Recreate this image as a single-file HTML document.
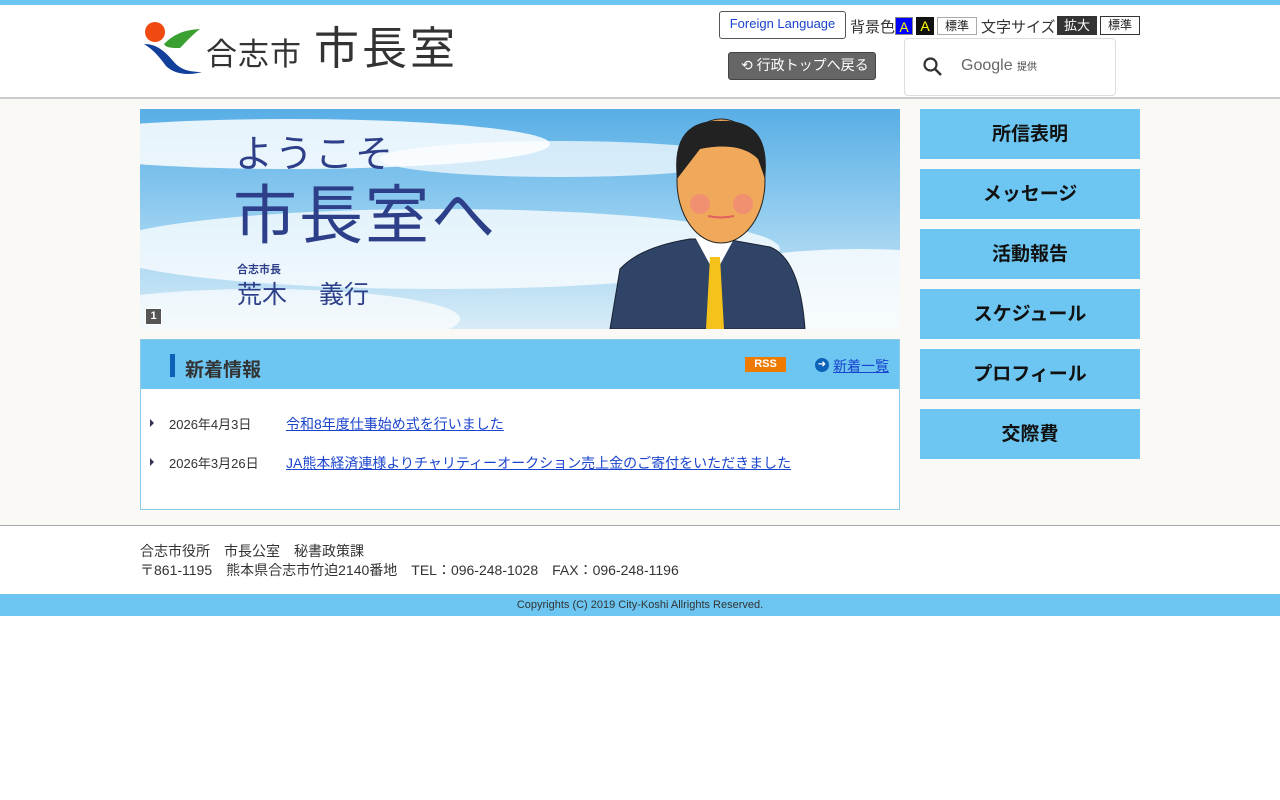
<!DOCTYPE html>
<html><head><meta charset="utf-8"><style>
*{margin:0;padding:0;box-sizing:border-box}
body{width:1280px;height:800px;background:#fff;font-family:"Liberation Sans","Noto Sans CJK JP",sans-serif;color:#333;position:relative;overflow:hidden}
.top{height:5px;background:#6cc6f1}
header{height:94px;border-bottom:2px solid #ccc;position:relative}
.abs{position:absolute}
main{background:#faf9f6;height:426px;position:relative}
.nav div{position:absolute;left:920px;width:220px;height:50px;background:#6cc6f1;font-weight:bold;font-size:19px;color:#111;text-align:center;line-height:52px}
a{color:#1a44cc;text-decoration:underline}
</style></head><body>
<div class="top"></div>
<header>
<svg class="abs" style="left:144px;top:17px" width="58" height="54" viewBox="0 0 58 54">
<circle cx="11" cy="10" r="10" fill="#f04a10"/>
<path d="M20 22 C30 12 40 8 56 7 C48 13 42 20 36 26 C28 26 22 26 20 22Z" fill="#3aa032"/>
<path d="M0 22 C12 22 20 28 30 40 C36 47 44 50 58 50 C44 54 30 52 22 44 C16 36 10 28 0 22Z" fill="#123f9a"/>
</svg>
<div class="abs" style="left:206px;top:24px;font-size:31px;color:#333;letter-spacing:1px">合志市</div>
<div class="abs" style="left:314px;top:16px;font-size:45px;color:#333;letter-spacing:3px;line-height:56px">市長室</div>
<div class="abs" style="left:719px;top:6px;width:127px;height:28px;border:1px solid #555;border-radius:3px;font-size:13px;color:#1a44cc;text-align:center;line-height:24px">Foreign Language</div>
<div class="abs" style="left:850px;top:11px;font-size:15px;color:#333">背景色</div>
<div class="abs" style="left:895px;top:12px;width:18px;height:18px;background:#0000ff;color:#ff0;font-size:14px;text-align:center;line-height:18px;border:1px solid #888">A</div>
<div class="abs" style="left:916px;top:12px;width:18px;height:18px;background:#111;color:#ff0;font-size:14px;text-align:center;line-height:18px">A</div>
<div class="abs" style="left:937px;top:12px;width:40px;height:18px;border:1px solid #aaa;font-size:12px;text-align:center;line-height:16px;color:#222">標準</div>
<div class="abs" style="left:981px;top:11px;font-size:15px;color:#333">文字サイズ</div>
<div class="abs" style="left:1057px;top:11px;width:40px;height:19px;background:#333;color:#fff;font-size:13px;text-align:center;line-height:19px">拡大</div>
<div class="abs" style="left:1100px;top:11px;width:40px;height:19px;border:1px solid #333;font-size:12px;text-align:center;line-height:17px;color:#222">標準</div>
<div class="abs" style="left:728px;top:47px;width:148px;height:28px;background:#666;border:1px solid #444;border-radius:3px;color:#fff;font-size:14px;line-height:24px;padding-left:12px">⟲ 行政トップへ戻る</div>
<div class="abs" style="left:904px;top:33px;width:212px;height:58px;border:1px solid #ddd;border-radius:4px;background:#fff">
<svg class="abs" style="left:17px;top:17px" width="22" height="22" viewBox="0 0 22 22"><circle cx="8.5" cy="8.5" r="6" fill="none" stroke="#333" stroke-width="2.2"/><path d="M13 13L19 19" stroke="#333" stroke-width="2.5"/></svg>
<div class="abs" style="left:56px;top:18px;font-size:16px;color:#666">Google <span style="font-size:10px;color:#444">提供</span></div>
</div>
</header>
<main>
<div class="abs" style="left:140px;top:10px;width:760px;height:220px;overflow:hidden;background:linear-gradient(180deg,#58aee6 0%,#8fcbef 45%,#d8ecf7 100%)">
<svg class="abs" style="left:0;top:0" width="760" height="220">
<ellipse cx="150" cy="35" rx="260" ry="25" fill="#fff" opacity=".85"/>
<ellipse cx="420" cy="50" rx="180" ry="18" fill="#fff" opacity=".7"/>
<ellipse cx="300" cy="140" rx="340" ry="40" fill="#fff" opacity=".75"/>
<ellipse cx="720" cy="190" rx="200" ry="50" fill="#fff" opacity=".8"/>
<ellipse cx="120" cy="210" rx="200" ry="30" fill="#fff" opacity=".7"/>
<path d="M470 220 L480 160 Q500 138 550 130 L585 130 L630 138 Q660 150 665 220Z" fill="#2f4466" stroke="#1a2333"/>
<path d="M555 128 L575 165 L595 128Z" fill="#fff"/>
<path d="M570 148 L580 148 L584 220 L566 220Z" fill="#f4c21a"/>
<ellipse cx="581" cy="72" rx="44" ry="62" fill="#f0a85a" stroke="#222"/>
<path d="M537 70 Q530 10 581 12 Q632 10 625 70 L618 50 Q600 32 560 40 Z" fill="#222"/>
<circle cx="560" cy="95" r="10" fill="#f08080" opacity=".6"/><circle cx="603" cy="95" r="10" fill="#f08080" opacity=".6"/>
<path d="M568 107 Q581 110 594 107" stroke="#e06060" stroke-width="2" fill="none"/>
</svg>
<div class="abs" style="left:95px;top:14px;font-size:38px;color:#2e3f8a;letter-spacing:2px">ようこそ</div>
<div class="abs" style="left:93px;top:56px;font-size:64px;color:#2e3f8a;letter-spacing:2px">市長室へ</div>
<div class="abs" style="left:97px;top:152px;font-size:11px;color:#2e3f8a;font-weight:bold">合志市長</div>
<div class="abs" style="left:97px;top:166px;font-size:25px;color:#2e3f8a">荒木　 義行</div>
<div class="abs" style="left:5px;top:199px;width:17px;height:17px;background:#555;border:1px solid #fff;color:#fff;font-size:11px;text-align:center;line-height:15px;font-weight:bold">1</div>
</div>
<div class="abs" style="left:140px;top:240px;width:760px;height:171px;border:1px solid #8fc9ea;background:#fff">
<div style="height:49px;background:#6cc6f1;position:relative">
<div class="abs" style="left:29px;top:14px;width:5px;height:23px;background:#0b62b8"></div>
<div class="abs" style="left:44px;top:15px;font-size:19px;font-weight:bold;color:#333">新着情報</div>
<div class="abs" style="left:604px;top:17px;width:41px;height:15px;background:#ee7a00;color:#fff;font-size:11px;font-weight:bold;text-align:center;line-height:15px">RSS</div>
<div class="abs" style="left:674px;top:18px;width:14px;height:14px;border-radius:50%;background:#0b62b8;color:#fff;font-size:10px;line-height:14px;text-align:center">➜</div>
<a class="abs" style="left:692px;top:16px;font-size:14px">新着一覧</a>
</div>
<div class="abs" style="left:9px;top:79px;width:0;height:0;border-left:4px solid #335;border-top:4px solid transparent;border-bottom:4px solid transparent"></div>
<div class="abs" style="left:28px;top:74px;font-size:13px">2026年4月3日</div>
<a class="abs" style="left:145px;top:74px;font-size:14px">令和8年度仕事始め式を行いました</a>
<div class="abs" style="left:9px;top:118px;width:0;height:0;border-left:4px solid #335;border-top:4px solid transparent;border-bottom:4px solid transparent"></div>
<div class="abs" style="left:28px;top:113px;font-size:13px">2026年3月26日</div>
<a class="abs" style="left:145px;top:113px;font-size:14px">JA熊本経済連様よりチャリティーオークション売上金のご寄付をいただきました</a>
</div>
<div class="nav"><div style="top:10px">所信表明</div><div style="top:70px">メッセージ</div><div style="top:130px">活動報告</div><div style="top:190px">スケジュール</div><div style="top:250px">プロフィール</div><div style="top:310px">交際費</div></div>
</main>
<div style="border-top:1px solid #aaa;height:69px;position:relative">
<div class="abs" style="left:140px;top:16px;font-size:14px;line-height:19px;color:#333">合志市役所　市長公室　秘書政策課<br>〒861-1195　熊本県合志市竹迫2140番地　TEL：096-248-1028　FAX：096-248-1196</div>
</div>
<div style="height:22px;background:#6cc6f1;text-align:center;font-size:11px;line-height:22px;color:#333">Copyrights (C) 2019 City-Koshi Allrights Reserved.</div>
</body></html>
